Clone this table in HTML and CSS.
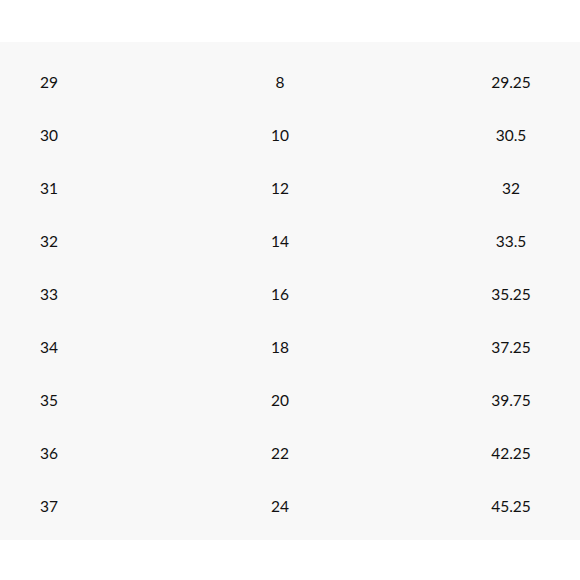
FILE: index.html
```html
<!DOCTYPE html>
<html>
<head>
<meta charset="utf-8">
<link rel="stylesheet" href="styles.css">
</head>
<body>
<div class="page">
  <div class="table">
    <div class="row"><span class="c1">29</span><span class="c2">8</span><span class="c3">29.25</span></div>
    <div class="row"><span class="c1">30</span><span class="c2">10</span><span class="c3">30.5</span></div>
    <div class="row"><span class="c1">31</span><span class="c2">12</span><span class="c3">32</span></div>
    <div class="row"><span class="c1">32</span><span class="c2">14</span><span class="c3">33.5</span></div>
    <div class="row"><span class="c1">33</span><span class="c2">16</span><span class="c3">35.25</span></div>
    <div class="row"><span class="c1">34</span><span class="c2">18</span><span class="c3">37.25</span></div>
    <div class="row"><span class="c1">35</span><span class="c2">20</span><span class="c3">39.75</span></div>
    <div class="row"><span class="c1">36</span><span class="c2">22</span><span class="c3">42.25</span></div>
    <div class="row"><span class="c1">37</span><span class="c2">24</span><span class="c3">45.25</span></div>
  </div>
</div>
</body>
</html>
```

FILE: styles.css
```css
html, body {
  margin: 0;
  padding: 0;
  background: #ffffff;
}
.page {
  padding-top: 42px;
  font-family: Lato, "Open Sans", sans-serif;
  font-size: 15.5px;
  color: #111111;
}
.table {
  background: #f8f8f8;
  padding: 13px 0 8px;
}
.row {
  display: grid;
  grid-template-columns: 98px 1fr 138px;
  height: 53px;
  align-items: center;
  text-align: center;
}
.c2 {
  padding-left: 20px;
}
```
